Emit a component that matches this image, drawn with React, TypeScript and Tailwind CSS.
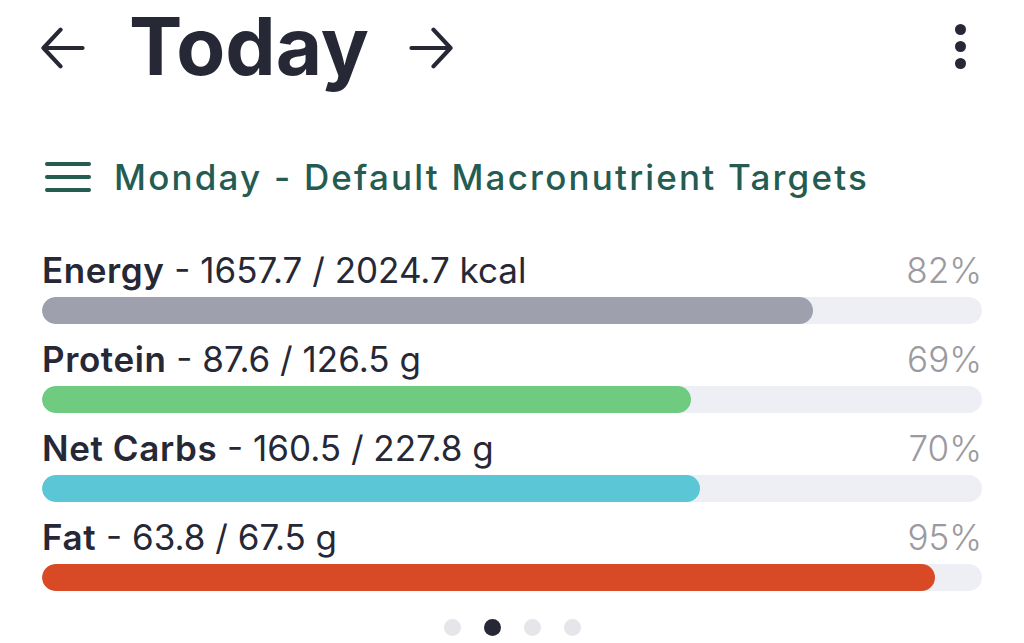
import React from "react";

const rows = [
  { name: "Energy", val: "1657.7 / 2024.7 kcal", pct: 82, color: "bg-[#9ea0ad]" },
  { name: "Protein", val: "87.6 / 126.5 g", pct: 69, color: "bg-[#6ecb80]" },
  { name: "Net Carbs", val: "160.5 / 227.8 g", pct: 70, color: "bg-[#5bc6d6]" },
  { name: "Fat", val: "63.8 / 67.5 g", pct: 95, color: "bg-[#d74a25]" },
];

export default function App() {
  return (
    <div className="w-[1024px] h-[643px] bg-white overflow-hidden" style={{ fontFamily: "Inter, 'Noto Sans', sans-serif" }}>
      <div className="flex items-center h-[100px] pl-[41px] pr-[58px] pb-[5px]">
        <svg width="44" height="44" viewBox="3 3 18 18" fill="none" stroke="#262836" strokeWidth="1.7" strokeLinecap="round" strokeLinejoin="round">
          <path d="M20 12H4M11 4.5l-7 7.5 7 7.5" />
        </svg>
        <div className="ml-[42px] px-[2px] text-[80px] font-bold text-[#262836] leading-[1.2] pb-[4px] whitespace-nowrap">Today</div>
        <svg className="ml-[38px]" width="44" height="44" viewBox="3 3 18 18" fill="none" stroke="#262836" strokeWidth="1.7" strokeLinecap="round" strokeLinejoin="round">
          <path d="M4 12h16M13 4.5l7 7.5-7 7.5" />
        </svg>
        <div className="ml-auto flex flex-col gap-[6px] mt-[-2px]">
          <div className="w-[11px] h-[11px] rounded-full bg-[#262836]" />
          <div className="w-[11px] h-[11px] rounded-full bg-[#262836]" />
          <div className="w-[11px] h-[11px] rounded-full bg-[#262836]" />
        </div>
      </div>
      <div className="flex items-center mt-[47px] pl-[45px] h-[60px]">
        <div className="flex flex-col gap-[9px]">
          <div className="w-[46px] h-[4px] rounded-full bg-[#245c52]" />
          <div className="w-[46px] h-[4px] rounded-full bg-[#245c52]" />
          <div className="w-[46px] h-[4px] rounded-full bg-[#245c52]" />
        </div>
        <div className="ml-[23px] text-[35px] font-medium text-[#245c52] tracking-[2.2px]">Monday - Default Macronutrient Targets</div>
      </div>
      <div className="flex flex-col gap-[18px] mt-[46px] px-[42px]">
        {rows.map((r) => (
          <div key={r.name} className="flex flex-col gap-[7px]">
            <div className="flex items-baseline justify-between h-[37px]">
              <div className="text-[35px] text-[#262836] leading-none">
                <span className="font-semibold tracking-[0.6px]">{r.name}</span>
                <span className="font-normal"> - {r.val}</span>
              </div>
              <div className="text-[35px] font-light text-[#9a9aa0] leading-none">{r.pct}%</div>
            </div>
            <div className="h-[27px] w-full rounded-full bg-[#eeeef5] overflow-hidden">
              <div className={`h-full rounded-full ${r.color}`} style={{ width: `${r.pct}%` }} />
            </div>
          </div>
        ))}
      </div>
      <div className="flex justify-center gap-[23px] mt-[28px]">
        <div className="w-[17px] h-[17px] rounded-full bg-[#e5e5ea]" />
        <div className="w-[17px] h-[17px] rounded-full bg-[#262836]" />
        <div className="w-[17px] h-[17px] rounded-full bg-[#e5e5ea]" />
        <div className="w-[17px] h-[17px] rounded-full bg-[#e5e5ea]" />
      </div>
    </div>
  );
}
